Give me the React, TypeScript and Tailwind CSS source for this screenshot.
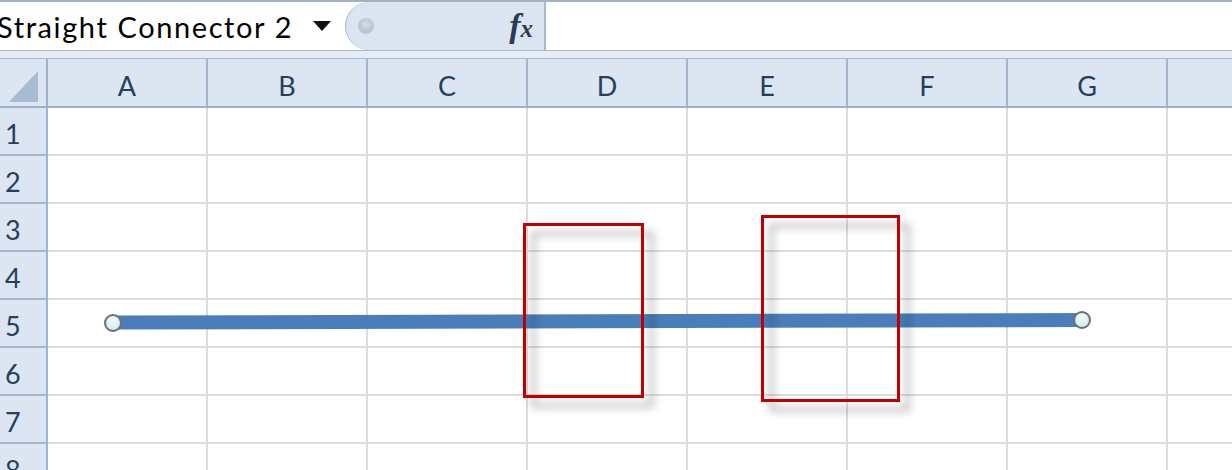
import React from "react";

const cols = ["A", "B", "C", "D", "E", "F", "G", ""];
const rows = ["1", "2", "3", "4", "5", "6", "7", "8"];

export default function App() {
  return (
    <div
      className="relative w-[1232px] h-[470px] overflow-hidden bg-white"
      style={{ fontFamily: "Lato, 'Open Sans', sans-serif" }}
    >
      {/* Formula bar */}
      <div className="flex h-[51px] border-t-2 border-b border-t-[#a3b1c3] border-b-[#a9b7c9]">
        <div className="flex w-[345px] shrink-0 items-center bg-white">
          <span className="-ml-[3px] text-[29px] leading-none text-black tracking-[1.6px]">
            Straight Connector 2
          </span>
          <svg className="ml-[20px]" width="18" height="10" viewBox="0 0 18 10">
            <polygon points="0,0 18,0 9,10" fill="#111" />
          </svg>
        </div>
        <div className="relative flex w-[201px] shrink-0 items-center justify-between rounded-l-[26px] border-l border-r-2 border-[#a9b7c9] bg-[#dbe5f1] pl-[12px] pr-[11px]">
          <div
            className="h-[16px] w-[16px] rounded-full"
            style={{ background: "radial-gradient(circle at 50% 40%, #d6dde5 0%, #b9c3ce 60%, #cfd7e0 100%)" }}
          />
          <span
            className="text-[34px] font-bold italic leading-none text-[#2b3b55]"
            style={{ fontFamily: "'Liberation Serif', 'DejaVu Serif', serif" }}
          >
            f<span className="text-[25px]">x</span>
          </span>
        </div>
        <div className="flex-1 bg-white" />
      </div>

      {/* Band */}
      <div className="h-[7px] bg-[#e6edf6]" />

      {/* Column header */}
      <div className="flex h-[50px] border-t border-b-2 border-t-[#a9b8cc] border-b-[#9fb2c9] bg-[#dbe6f2]">
        <div className="flex w-[48px] shrink-0 items-end border-r-2 border-[#9fb2c9] pb-[4px] pl-[9px]">
          <svg width="30" height="31" viewBox="0 0 30 31">
            <polygon points="0,31 29,0 29,31" fill="#a9bad3" />
          </svg>
        </div>
        {cols.map((c, i) => (
          <div
            key={i}
            className="flex w-[160px] shrink-0 items-center justify-center border-r-2 border-[#a3b5cc] pt-[6px] text-[27px] leading-none text-[#253f60]"
          >
            {c}
          </div>
        ))}
      </div>

      {/* Rows */}
      {rows.map((r) => (
        <div key={r} className="flex h-[48px]">
          <div className="flex w-[48px] shrink-0 items-center border-r-2 border-b-2 border-[#9fb6ce] bg-[#dbe6f2] pl-[5px] pt-[4px] text-[27px] leading-none text-[#253f60]">
            {r}
          </div>
          {cols.map((_, i) => (
            <div key={i} className="w-[160px] shrink-0 border-r-2 border-b-2 border-[#dcdcdc]" />
          ))}
        </div>
      ))}

      {/* Connector line */}
      <svg className="pointer-events-none absolute left-0 top-0" width="1232" height="470">
        <line x1="113" y1="322.5" x2="1082" y2="320" stroke="#4a7ebb" strokeWidth="14" />
      </svg>

      {/* Red rectangles */}
      <div className="absolute left-[523px] top-[223px] h-[175px] w-[121px] border-[3px] border-[#c00000] drop-shadow-[9px_9px_4px_rgba(0,0,0,0.38)]" />
      <div className="absolute left-[761px] top-[215px] h-[187px] w-[139px] border-[3px] border-[#c00000] drop-shadow-[9px_9px_4px_rgba(0,0,0,0.38)]" />

      {/* Handles */}
      <svg className="pointer-events-none absolute left-0 top-0" width="1232" height="470">
        <defs>
          <radialGradient id="hg" cx="50%" cy="35%" r="65%">
            <stop offset="0%" stopColor="#f4fcfd" />
            <stop offset="100%" stopColor="#c5e9ee" />
          </radialGradient>
        </defs>
        <circle cx="113" cy="323" r="8" fill="url(#hg)" stroke="#6e6e6e" strokeWidth="2" />
        <circle cx="1082" cy="320" r="8" fill="url(#hg)" stroke="#6e6e6e" strokeWidth="2" />
      </svg>
    </div>
  );
}
